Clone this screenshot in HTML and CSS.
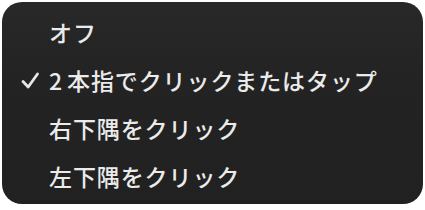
FILE: index.html
```html
<!DOCTYPE html>
<html lang="ja">
<head>
  <meta charset="UTF-8">
  <title>Menu</title>
  <link rel="stylesheet" href="styles.css">
</head>
<body>
  <ul class="menu">
    <li class="menu-item">
      <span class="check"></span>
      <span class="label">オフ</span>
    </li>
    <li class="menu-item">
      <span class="check">
        <svg width="19" height="17" viewBox="0 0 19 17">
          <path d="M2 9.5 L7.2 15 L16.5 2" fill="none" stroke="#e6e6e6" stroke-width="2.8" stroke-linecap="round" stroke-linejoin="round"/>
        </svg>
      </span>
      <span class="label"><span class="num">2</span>本指でクリックまたはタップ</span>
    </li>
    <li class="menu-item">
      <span class="check"></span>
      <span class="label">右下隅をクリック</span>
    </li>
    <li class="menu-item">
      <span class="check"></span>
      <span class="label">左下隅をクリック</span>
    </li>
  </ul>
</body>
</html>
```

FILE: styles.css
```css
/* popup menu */
body {
  margin: 0;
  padding: 2px;
  background: #ffffff;
  font-family: "Noto Sans CJK JP", "Noto Sans", sans-serif;
}
.menu {
  list-style: none;
  margin: 0;
  padding: 6px 0 4px 0;
  width: 421px;
  height: 202px;
  box-sizing: border-box;
  border-radius: 20px;
  background: linear-gradient(#282828 0%, #232323 40%, #212121 100%);
}
.menu-item {
  display: flex;
  align-items: center;
  height: 48px;
  color: #ebebeb;
  font-size: 23px;
  font-weight: 500;
  letter-spacing: 0.9px;
}
.check {
  width: 28px;
  margin-left: 19px;
  display: flex;
  align-items: center;
}
.label {
  white-space: nowrap;
}
.num {
  margin-right: 4px;
}
```
